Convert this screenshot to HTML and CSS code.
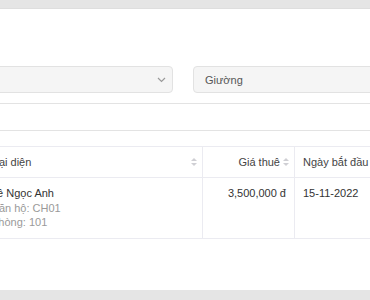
FILE: index.html
```html
<!DOCTYPE html>
<html lang="vi">
<head>
<meta charset="utf-8">
<title>Hợp đồng thuê</title>
<link rel="stylesheet" href="styles.css">
</head>
<body>
<div class="page">
  <div class="card">
    <div class="filters">
      <div class="select">
        <span class="value">Căn hộ</span>
        <svg class="chevron" width="9" height="6" viewBox="0 0 9 6"><path d="M1 1 L4.5 4.5 L8 1" fill="none" stroke="#9a9a9a" stroke-width="1.2"/></svg>
      </div>
      <div class="select">
        <span class="value">Giường</span>
      </div>
    </div>
    <div class="search"></div>
    <table class="grid">
      <colgroup>
        <col class="col-idx">
        <col class="col-rep">
        <col class="col-price">
        <col class="col-start">
      </colgroup>
      <thead>
        <tr>
          <th>STT</th>
          <th class="sortable">Đại diện<span class="sort"><i class="up"></i><i class="down"></i></span></th>
          <th class="sortable num">Giá thuê<span class="sort"><i class="up"></i><i class="down"></i></span></th>
          <th>Ngày bắt đầu</th>
        </tr>
      </thead>
      <tbody>
        <tr>
          <td>1</td>
          <td>
            <div class="name">Lê Ngọc Anh</div>
            <div class="sub">Căn hộ: CH01</div>
            <div class="sub">Phòng: 101</div>
          </td>
          <td class="num">3,500,000 đ</td>
          <td>15-11-2022</td>
        </tr>
      </tbody>
    </table>
  </div>
</div>
</body>
</html>
```

FILE: styles.css
```css
* { box-sizing: border-box; }
html, body { margin: 0; padding: 0; }
body {
  background: #e5e5e5;
  font-family: "Liberation Sans", Arial, sans-serif;
  font-size: 11px;
  color: #333;
  overflow: hidden;
  width: 370px;
  height: 300px;
}
.page {
  padding-top: 8px;
}
.card {
  background: #fff;
  border-top: 1px solid #dedede;
  margin-left: -200px;
  width: 766px;
  height: 282px;
  padding: 57px 20px 0;
}
.filters {
  display: grid;
  grid-template-columns: 1fr 1fr;
  gap: 20px;
}
.select {
  height: 27px;
  background: #f5f5f5;
  border: 1px solid #e2e2e2;
  border-radius: 4px;
  display: flex;
  align-items: center;
  justify-content: space-between;
  padding: 0 6px 0 11px;
  color: #555;
}
.chevron { display: block; }
.search {
  margin-top: 10px;
  height: 28px;
  border: 1px solid #e3e3e3;
  background: #fff;
}
.grid {
  margin-top: 15px;
  width: 100%;
  table-layout: fixed;
  border-collapse: collapse;
}
.col-idx { width: 162px; }
.col-rep { width: 220px; }
.col-price { width: 92px; }
.grid th, .grid td {
  border: 1px solid #ebebf1;
  text-align: left;
  padding: 0 8px;
  white-space: nowrap;
  overflow: hidden;
}
.grid th {
  height: 31px;
  font-weight: normal;
  color: #444;
  vertical-align: middle;
  position: relative;
}
.grid th.sortable { padding-right: 14px; }
.grid td {
  vertical-align: top;
  padding-top: 8px;
  padding-bottom: 8px;
  line-height: 14.5px;
  color: #333;
}
.grid .num { text-align: right; }
.sub { color: #9a9a9a; }
.sort {
  position: absolute;
  right: 5px;
  top: 50%;
  margin-top: -4px;
  width: 6px;
  height: 8px;
  display: flex;
  flex-direction: column;
  justify-content: space-between;
  align-items: center;
}
.sort i {
  display: block;
  width: 0;
  height: 0;
  border-left: 3px solid transparent;
  border-right: 3px solid transparent;
}
.sort .up { border-bottom: 3px solid #cfcfd4; }
.sort .down { border-top: 3px solid #cfcfd4; }
```
